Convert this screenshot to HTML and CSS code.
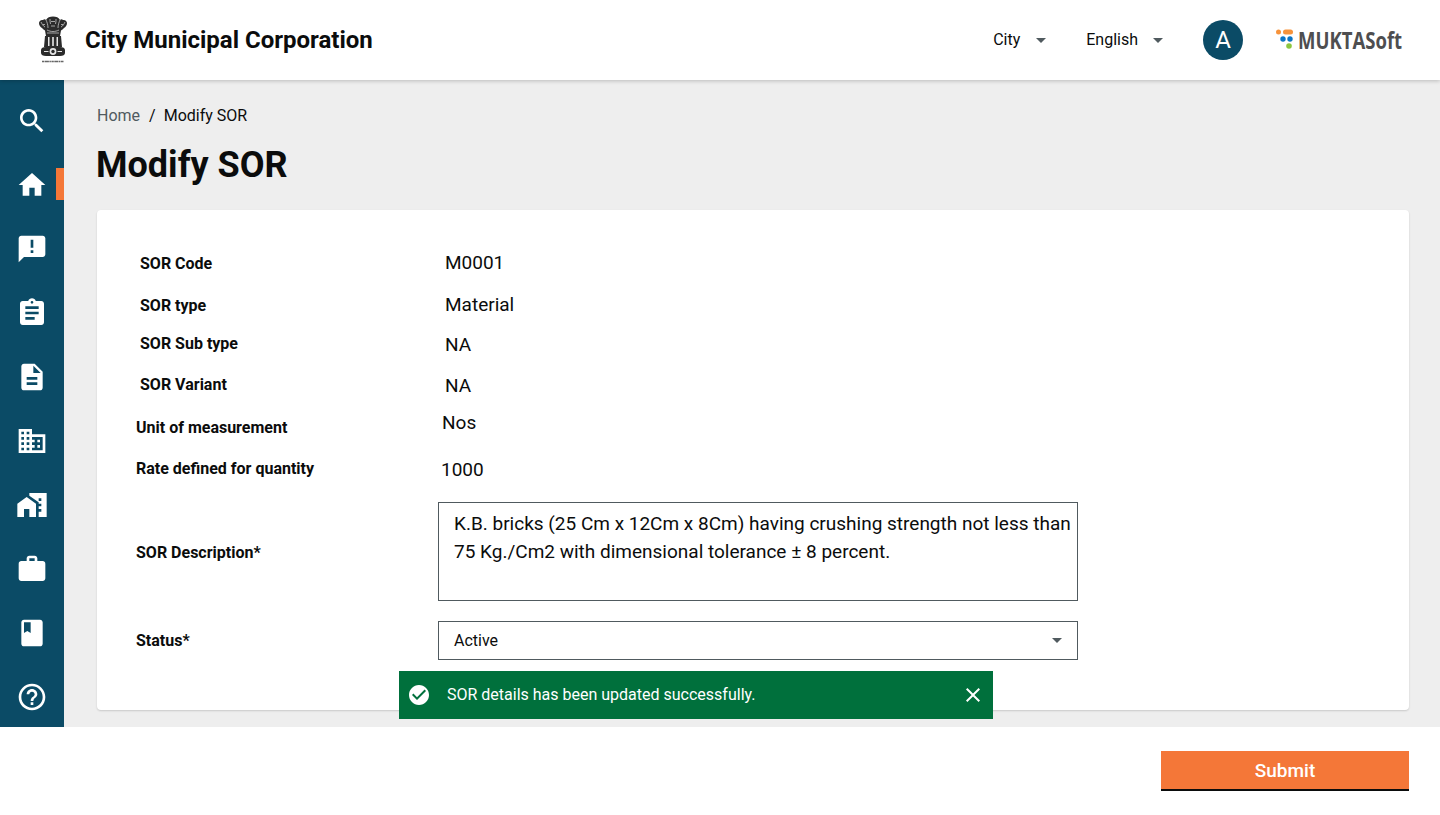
FILE: index.html
```html
<!DOCTYPE html>
<html lang="en">
<head>
<meta charset="utf-8">
<title>Modify SOR</title>
<link rel="stylesheet" href="styles.css">
</head>
<body>
<header class="topbar">
  <svg class="emblem" viewBox="0 0 30 48" aria-hidden="true">
    <g fill="#2b2b2b">
      <path d="M1 7c0-2 2-3.500 4-3 1-1 2-1 3 0 1-2.500 4-3.500 7-3.500s6 1 7 3.500c1-1 2-1 3 0 2-.5 4 1 4 3 0 2.500-1.500 4-3 5-1 1-2 2-3 2.500l-1 5.500H8l-1-5.500c-1-.5-2-1.500-3-2.500-1.500-1-3-2.500-3-5z"/>
      <path d="M7 20h16l1 11H6z"/>
      <path d="M3 34c0-2 2-3 5-3h14c3 0 5 1 5 3v3c0 2-2 3-5 3H8c-3 0-5-1-5-3z"/>
    </g>
    <g fill="none" stroke="#d8d8d8" stroke-width=".7">
      <path d="M3 6c1 2 2 4 4 5M8 4c1 2 2 5 2 8M12 3c0 2 0 3 .5 5M18 3c0 2 0 3-.5 5M22 4c-1 2-2 5-2 8M27 6c-1 2-2 4-4 5"/>
      <path d="M9 14c2 1 4 1.500 6 1.500s4-.5 6-1.500M9 17h12"/>
      <path d="M5 8.500h2M23 8.500h2M13 5.500h4M13 10h4"/>
    </g>
    <g fill="#e6e6e6">
      <path d="M10 21h1.500v9H10zM14.200 21h1.600v9h-1.600zM18.500 21H20v9h-1.500z"/>
      <circle cx="15" cy="35.500" r="3.400"/>
      <path d="M6 35h4.500v1H6zM19.500 35H24v1h-4.500z"/>
    </g>
    <circle cx="15" cy="35.500" r="1.700" fill="#2b2b2b"/>
    <path d="M4 45.500h22" stroke="#666" stroke-width="1.600" stroke-dasharray="2.400 .5 4 .5 1.500 .5"/>
  </svg>
  <h1 class="city-title">City Municipal Corporation</h1>
  <div class="top-actions">
    <div class="dropdown dropdown-city"><span>City</span><i class="caret"></i></div>
    <div class="dropdown dropdown-lang"><span>English</span><i class="caret"></i></div>
    <div class="avatar">A</div>
    <div class="brand">
      <svg class="brand-mark" viewBox="0 0 17 20" aria-hidden="true">
        <circle cx="2.500" cy="3" r="2.500" fill="#f7933b"/>
        <rect x="7" y="0.500" width="10" height="5" rx="2.500" fill="#f7933b"/>
        <circle cx="7" cy="10" r="2.700" fill="#0b74c4"/>
        <circle cx="14" cy="10" r="2.700" fill="#0b74c4"/>
        <circle cx="13" cy="17" r="2.800" fill="#8cc63f"/>
      </svg>
      <span class="brand-name">MUKTASoft</span>
    </div>
  </div>
</header>

<div class="middle">
  <nav class="sidebar">
    <div class="nav-item"><svg viewBox="0 0 24 24"><path d="M15.500 14h-.79l-.28-.27C15.410 12.590 16 11.110 16 9.500 16 5.910 13.090 3 9.500 3S3 5.910 3 9.500 5.910 16 9.500 16c1.610 0 3.090-.59 4.230-1.570l.27.28v.79l5 4.990L20.490 19l-4.990-5zm-6 0C7.010 14 5 11.990 5 9.500S7.010 5 9.500 5 14 7.010 14 9.500 11.990 14 9.500 14z"/></svg></div>
    <div class="nav-item nav-active"><svg viewBox="0 0 24 24"><path d="M10 20v-6h4v6h5v-8h3L12 3 2 12h3v8z"/></svg></div>
    <div class="nav-item"><svg viewBox="0 0 24 24"><path d="M20 2H4c-1.100 0-1.990.9-1.990 2L2 22l4-4h14c1.100 0 2-.9 2-2V4c0-1.100-.9-2-2-2zm-7 9h-2V5h2v6zm0 4h-2v-2h2v2z"/></svg></div>
    <div class="nav-item"><svg viewBox="0 0 24 24"><path d="M19 3h-4.180C14.400 1.840 13.300 1 12 1c-1.300 0-2.400.84-2.820 2H5c-1.100 0-2 .9-2 2v14c0 1.100.9 2 2 2h14c1.100 0 2-.9 2-2V5c0-1.100-.9-2-2-2zm-7 0c.55 0 1 .45 1 1s-.45 1-1 1-1-.45-1-1 .45-1 1-1zm2 14H7v-2h7v2zm3-4H7v-2h10v2zm0-4H7V7h10v2z"/></svg></div>
    <div class="nav-item"><svg viewBox="0 0 24 24"><path d="M14 2H6c-1.100 0-1.990.9-1.990 2L4 20c0 1.100.89 2 1.990 2H18c1.100 0 2-.9 2-2V8l-6-6zm2 16H8v-2h8v2zm0-4H8v-2h8v2zm-3-5V3.500L18.500 9H13z"/></svg></div>
    <div class="nav-item"><svg viewBox="0 0 24 24"><path d="M12 7V3H2v18h20V7H12zM6 19H4v-2h2v2zm0-4H4v-2h2v2zm0-4H4V9h2v2zm0-4H4V5h2v2zm4 12H8v-2h2v2zm0-4H8v-2h2v2zm0-4H8V9h2v2zm0-4H8V5h2v2zm10 12h-8v-2h2v-2h-2v-2h2v-2h-2V9h8v10zm-2-8h-2v2h2v-2zm0 4h-2v2h2v-2z"/></svg></div>
    <div class="nav-item"><svg viewBox="0 0 24 24"><path d="M1 11v10h5v-6h4v6h5V11L8 6zM10 3v1.970l7 5V11h2v2h-2v2h2v2h-2v4h6V3H10zm9 6h-2V7h2v2z"/></svg></div>
    <div class="nav-item"><svg viewBox="0 0 24 24"><path d="M20 6h-4V4c0-1.110-.89-2-2-2h-4c-1.110 0-2 .89-2 2v2H4c-1.110 0-1.990.89-1.990 2L2 19c0 1.110.89 2 2 2h16c1.110 0 2-.89 2-2V8c0-1.110-.89-2-2-2zm-6 0h-4V4h4v2z"/></svg></div>
    <div class="nav-item"><svg viewBox="0 0 24 24"><path d="M18 2H6c-1.100 0-2 .9-2 2v16c0 1.100.9 2 2 2h12c1.100 0 2-.9 2-2V4c0-1.100-.9-2-2-2zM6 4h5v8l-2.500-1.500L6 12V4z"/></svg></div>
    <div class="nav-item"><svg viewBox="0 0 24 24"><path d="M11 18h2v-2h-2v2zm1-16C6.480 2 2 6.480 2 12s4.480 10 10 10 10-4.480 10-10S17.520 2 12 2zm0 18c-4.410 0-8-3.590-8-8s3.590-8 8-8 8 3.590 8 8-3.590 8-8 8zm0-14c-2.210 0-4 1.790-4 4h2c0-1.100.9-2 2-2s2 .9 2 2c0 2-3 1.750-3 5h2c0-2.250 3-2.500 3-5 0-2.210-1.790-4-4-4z"/></svg></div>
  </nav>

  <main class="content">
    <div class="breadcrumb"><span class="crumb-link">Home</span><span class="crumb-sep">/</span><span>Modify SOR</span></div>
    <h2 class="page-title">Modify SOR</h2>
    <section class="card">
      <div class="label label-in">SOR Code</div><div class="value value-a value-up">M0001</div>
      <div class="label label-in label-type">SOR type</div><div class="value value-a">Material</div>
      <div class="label label-in label-up">SOR Sub type</div><div class="value value-a">NA</div>
      <div class="label label-in">SOR Variant</div><div class="value value-a value-down">NA</div>
      <div class="label label-down">Unit of measurement</div><div class="value value-b value-raise">Nos</div>
      <div class="label">Rate defined for quantity</div><div class="value value-c">1000</div>
      <div class="label label-desc">SOR Description*</div>
      <div class="text-box">K.B. bricks (25 Cm x 12Cm x 8Cm) having crushing strength not less than 75 Kg./Cm2 with dimensional tolerance ± 8 percent.</div>
      <div class="label label-status">Status*</div>
      <div class="select-box"><span>Active</span><i class="caret"></i></div>
    </section>
    <div class="toast">
      <svg class="toast-check" viewBox="0 0 24 24"><path d="M12 2C6.480 2 2 6.480 2 12s4.480 10 10 10 10-4.480 10-10S17.520 2 12 2zm-2 15l-5-5 1.410-1.410L10 14.170l7.590-7.590L19 8l-9 9z"/></svg>
      <span class="toast-text">SOR details has been updated successfully.</span>
      <svg class="toast-close" viewBox="0 0 24 24"><path d="M19 6.410L17.590 5 12 10.590 6.410 5 5 6.410 10.590 12 5 17.590 6.410 19 12 13.410 17.590 19 19 17.590 13.410 12z"/></svg>
    </div>
  </main>
</div>

<footer class="action-bar"><button class="submit" type="button">Submit</button></footer>
</body>
</html>
```

FILE: styles.css
```css
* { box-sizing: border-box; }
html, body { height: 100%; }
body {
  margin: 0;
  height: 815px;
  display: flex;
  flex-direction: column;
  overflow: hidden;
  background: #fff;
  color: #0b0c0c;
  font-family: Roboto, "Liberation Sans", sans-serif;
}

.topbar {
  position: relative;
  z-index: 2;
  flex: 0 0 80px;
  display: flex;
  align-items: center;
  padding-left: 38px;
  background: #fff;
  box-shadow: 0 1px 4px rgba(0, 0, 0, .22);
}
.emblem { width: 30px; height: 48px; flex: none; }
.city-title { margin: 0 0 0 17px; font-size: 24px; line-height: 32px; font-weight: 700; }
.top-actions { margin-left: auto; display: flex; align-items: center; padding-right: 38px; }
.dropdown { display: flex; align-items: center; font-size: 16px; line-height: 20px; margin-top: -1px; color: #0b0c0c; }
.dropdown-city { margin-right: 40px; }
.dropdown-lang { margin-right: 40px; }
.caret {
  display: block;
  width: 0;
  height: 0;
  border-left: 5px solid transparent;
  border-right: 5px solid transparent;
  border-top: 5px solid #505a5f;
}
.dropdown .caret { margin-left: 16px; margin-top: 1px; }
.dropdown-lang .caret { margin-left: 15px; }
.avatar {
  width: 40px;
  height: 40px;
  border-radius: 50%;
  background: #0b4b66;
  color: #fff;
  display: flex;
  align-items: center;
  justify-content: center;
  font-size: 24px;
  line-height: 1;
}
.brand { margin-left: 33px; display: flex; align-items: center; width: 126px; }
.brand-mark { width: 17px; height: 20px; flex: none; margin-top: -2px; }
.brand-name {
  display: inline-block;
  margin-left: 5px;
  font-family: "Open Sans", sans-serif;
  font-weight: 700;
  font-size: 23px;
  line-height: 28px;
  color: #4e4e50;
  transform: scaleX(.805);
  transform-origin: left center;
  white-space: nowrap;
}

.middle { flex: 0 0 647px; display: flex; min-height: 0; }
.sidebar { flex: 0 0 64px; padding-top: 9px; background: #0b4b66; overflow: hidden; }
.nav-item {
  position: relative;
  height: 64px;
  display: flex;
  align-items: center;
  justify-content: center;
}
.nav-item svg { width: 32px; height: 32px; fill: #fff; display: block; }
.nav-active::after {
  content: "";
  position: absolute;
  right: 0;
  top: 15px;
  width: 8px;
  height: 32px;
  background: #f47738;
}

.content { position: relative; flex: 1; padding: 24px 31px 0 33px; background: #eee; overflow: hidden; }
.breadcrumb { display: flex; font-size: 16px; line-height: 24px; color: #0b0c0c; }
.crumb-link { color: #505a5f; }
.crumb-sep { margin: 0 8px 0 9px; }
.page-title { margin: 15px 0 0 -1px; font-size: 36px; line-height: 44px; font-weight: 700; }
.card {
  margin-top: 23px;
  height: 500px;
  padding: 34px 0 0 39px;
  display: grid;
  grid-template-columns: 302px 640px;
  grid-template-rows: 40px 42px 38px 42px 42px 42px 12px 99px 20px 39px;
  background: #fff;
  border-radius: 4px;
  box-shadow: 0 1px 2px rgba(0, 0, 0, .16);
}
.label { grid-column: 1; align-self: center; font-size: 16px; line-height: 20px; font-weight: 700; }
.value { grid-column: 2; align-self: center; font-size: 19px; line-height: 24px; }
.label-in { padding-left: 4px; }
.label-type { margin-top: 2px; }
.label-up { margin-top: -2px; }
.label-down { margin-top: 2px; }
.label-desc { grid-row: 8; margin-top: 2px; }
.label-status { grid-row: 10; }
.value-a { padding-left: 7px; }
.value-b { padding-left: 4px; }
.value-c { padding-left: 3px; margin-top: 2px; }
.value-up { margin-top: -2px; }
.value-down { margin-top: 2px; }
.value-raise { margin-top: -8px; }

.text-box {
  grid-column: 2;
  grid-row: 8;
  padding: 7px 4px 0 15px;
  border: 1px solid #505a5f;
  font-size: 19px;
  line-height: 28px;
  color: #0b0c0c;
}
.select-box {
  grid-column: 2;
  grid-row: 10;
  display: flex;
  align-items: center;
  justify-content: space-between;
  padding: 0 15px;
  border: 1px solid #505a5f;
  font-size: 16px;
}

.toast {
  position: absolute;
  left: 335px;
  top: 591px;
  width: 594px;
  height: 48px;
  display: flex;
  align-items: center;
  padding: 0 8px 0 8px;
  background: #00703c;
  color: #fff;
}
.toast-check { width: 24px; height: 24px; fill: #fff; flex: none; }
.toast-text { margin-left: 16px; font-size: 16px; line-height: 24px; }
.toast-close { margin-left: auto; width: 24px; height: 24px; fill: #fff; flex: none; }

.action-bar {
  flex: 1;
  display: flex;
  justify-content: flex-end;
  align-items: flex-start;
  padding: 24px 31px 0 0;
  background: #fff;
}
.submit {
  width: 248px;
  height: 40px;
  border: 0;
  border-bottom: 2px solid #0b0c0c;
  border-radius: 0;
  padding: 2px 0 0;
  background: #f47738;
  color: #fff;
  font-family: Roboto, sans-serif;
  font-size: 19px;
  font-weight: 500;
  line-height: 24px;
}
```
